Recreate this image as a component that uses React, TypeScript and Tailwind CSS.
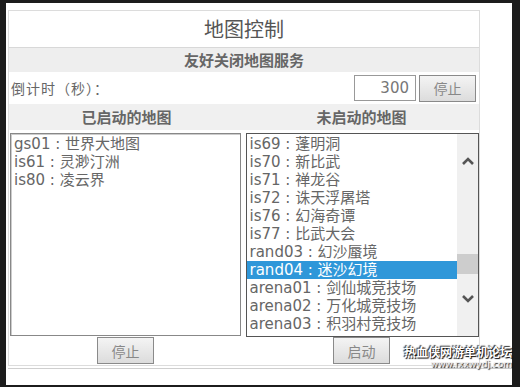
import React from "react";

const started = [
	["gs01", "世界大地图"],
	["is61", "灵渺汀洲"],
	["is80", "凌云界"],
];

const stopped = [
	["is69", "蓬明洞"],
	["is70", "新比武"],
	["is71", "禅龙谷"],
	["is72", "诛天浮屠塔"],
	["is76", "幻海奇谭"],
	["is77", "比武大会"],
	["rand03", "幻沙蜃境"],
	["rand04", "迷沙幻境"],
	["arena01", "剑仙城竞技场"],
	["arena02", "万化城竞技场"],
	["arena03", "积羽村竞技场"],
];

const font = { fontFamily: '"DejaVu Sans", "Noto Sans CJK SC", sans-serif' };

function GrayButton({ label }: { label: string }) {
	return (
		<button className="w-[57px] h-[27px] border border-[#8a8a8a] bg-gradient-to-b from-[#f4f4f4] to-[#dcdcdc] text-[14px] text-[#888] [font-family:'Noto_Sans_CJK_SC',sans-serif] leading-none">
			{label}
		</button>
	);
}

export default function App() {
	return (
		<div className="w-[520px] h-[387px] bg-[#1c1c1c] pl-[6px] pr-[8px] pt-[3px] pb-[2px]" style={font}>
			<div className="h-full bg-white pl-[2px] pt-[7px] flex flex-col">
				<div className="w-[472px] border border-[#dcdcdc] flex flex-col">
					{/* title */}
					<div className="h-[37px] flex items-center justify-center text-[20px] text-[#555] border-b border-[#d8d8d8] [font-family:'Noto_Sans_CJK_SC',sans-serif]">
						地图控制
					</div>
					<div className="h-[24px] bg-[#eeeeee] flex items-center justify-center text-[15px] font-bold text-[#666] [font-family:'Noto_Sans_CJK_SC',sans-serif]">
						友好关闭地图服务
					</div>

					{/* countdown */}
					<div className="h-[32px] flex items-center pl-[2px] pr-[3px]">
						<span className="text-[14px] text-[#666] tracking-[1px] [font-family:'Noto_Sans_CJK_SC',sans-serif]">
							倒计时（秒）：
						</span>
						<div className="ml-auto w-[62px] h-[26px] border border-[#999] flex items-center justify-end pr-[6px] text-[15px] text-[#777]">
							300
						</div>
						<div className="ml-[3px]">
							<GrayButton label="停止" />
						</div>
					</div>

					{/* list headers */}
					<div className="h-[26px] bg-[#f0f0f0] grid grid-cols-2 items-center text-[15px] font-bold text-[#666] [font-family:'Noto_Sans_CJK_SC',sans-serif]">
						<div className="text-center">已启动的地图</div>
						<div className="text-center">未启动的地图</div>
					</div>

					{/* lists */}
					<div className="flex pt-[3px] pl-[1px] gap-[5px]">
						<div className="w-[231px] h-[203px] border border-[#888] shadow-[inset_1px_1px_0_#ccc] px-[3px] pt-[1px] text-[15px] leading-[18px] text-[#666]">
							{started.map(([code, name]) => (
								<div key={code} className="whitespace-pre">
									{code} : {name}
								</div>
							))}
						</div>
						<div className="w-[234px] h-[204px] border border-[#555] overflow-hidden flex">
							<div className="flex-1 pt-[1px] text-[15px] leading-[18px] text-[#666]">
								{stopped.map(([code, name]) => (
									<div
										key={code}
										className={`px-[3px] whitespace-pre h-[18px] ${
											code === "rand04" ? "bg-[#2f97d9] text-white" : ""
										}`}
									>
										{code} : {name}
									</div>
								))}
							</div>
							{/* scrollbar */}
							<div className="w-[21px] bg-[#f0f0f0] flex flex-col items-center">
								<svg className="mt-[22px]" width="14" height="10" viewBox="0 0 14 10">
									<path d="M2 8 L7 3 L12 8" fill="none" stroke="#555" strokeWidth="2.6" />
								</svg>
								<div className="mt-[88px] w-full h-[20px] bg-[#cdcdcd]" />
								<svg className="mt-[20px]" width="14" height="10" viewBox="0 0 14 10">
									<path d="M2 2 L7 7 L12 2" fill="none" stroke="#555" strokeWidth="2.6" />
								</svg>
							</div>
						</div>
					</div>

					{/* buttons */}
					<div className="h-[28px] flex">
						<div className="ml-[88px]">
							<GrayButton label="停止" />
						</div>
						<div className="ml-[179px]">
							<GrayButton label="启动" />
						</div>
					</div>
				</div>
				<div className="relative mt-[2px] w-[504px] border-t border-[#cfcfcf] flex-1">
					<div className="absolute right-[0px] top-[-23px] text-right leading-none">
						<div className="text-[12px] font-bold text-white [text-shadow:1px_1px_1px_#000,-1px_-1px_1px_#333] [font-family:'Noto_Sans_CJK_SC',sans-serif]">
							热血侠网游单机论坛
						</div>
						<div className="text-[9px] text-[#eee] [text-shadow:1px_1px_1px_#000] mt-[2px]">www.rxxwydj.com</div>
					</div>
				</div>
			</div>
		</div>
	);
}
